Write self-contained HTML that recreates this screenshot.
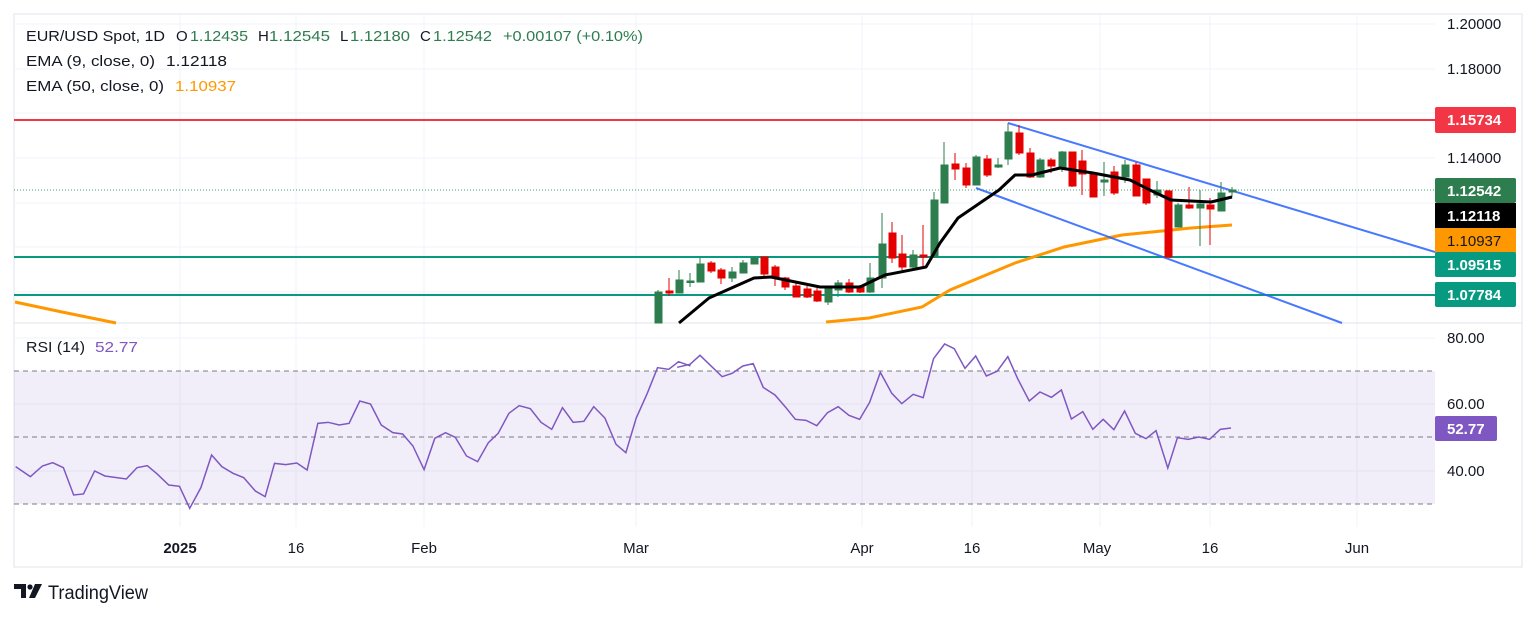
<!DOCTYPE html>
<html><head><meta charset="utf-8"><style>
body{margin:0;background:#fff;width:1536px;height:617px;overflow:hidden;font-family:"Liberation Sans",sans-serif}
svg{position:absolute;left:0;top:0}
</style></head><body>
<svg width="1536" height="617" viewBox="0 0 1536 617" font-family="Liberation Sans, sans-serif">
<rect x="14" y="14" width="1508" height="553" fill="#fff" stroke="#e0e3eb"/>
<g stroke="#f0f3fa" stroke-width="1">
<line x1="14" y1="24" x2="1435" y2="24"/><line x1="14" y1="69" x2="1435" y2="69"/><line x1="14" y1="113" x2="1435" y2="113"/><line x1="14" y1="158" x2="1435" y2="158"/><line x1="14" y1="203" x2="1435" y2="203"/><line x1="14" y1="247" x2="1435" y2="247"/><line x1="14" y1="292" x2="1435" y2="292"/>
<line x1="180" y1="14" x2="180" y2="527"/><line x1="296" y1="14" x2="296" y2="527"/><line x1="424" y1="14" x2="424" y2="527"/><line x1="636" y1="14" x2="636" y2="527"/><line x1="862" y1="14" x2="862" y2="527"/><line x1="972" y1="14" x2="972" y2="527"/><line x1="1100" y1="14" x2="1100" y2="527"/><line x1="1210" y1="14" x2="1210" y2="527"/><line x1="1357" y1="14" x2="1357" y2="527"/>
<line x1="14" y1="338" x2="1435" y2="338"/><line x1="14" y1="404" x2="1435" y2="404"/><line x1="14" y1="471" x2="1435" y2="471"/>
</g>
<line x1="14" y1="323" x2="1522" y2="323" stroke="#e0e3eb"/>
<line x1="14" y1="120" x2="1435" y2="120" stroke="#f23645" stroke-width="2"/>
<line x1="14" y1="190" x2="1435" y2="190" stroke="#43a070" stroke-width="1" stroke-dasharray="1,2"/>
<line x1="14" y1="257" x2="1435" y2="257" stroke="#089981" stroke-width="2"/>
<line x1="14" y1="295" x2="1435" y2="295" stroke="#089981" stroke-width="2"/>
<polyline fill="none" stroke="#ff9800" stroke-width="3" points="15,302 62,312 116,323"/>
<polyline fill="none" stroke="#ff9800" stroke-width="3" points="826,322 869,318 922,307 950,290 1015,263 1064,247 1122,235 1162,231 1191,228 1232,225"/>
<line x1="1008" y1="123" x2="1435" y2="252" stroke="#2962ff" stroke-width="2" opacity=".85"/>
<line x1="976" y1="188" x2="1342" y2="323" stroke="#2962ff" stroke-width="2" opacity=".85"/>
<g stroke-width="1">
<g stroke="#2e7d4f" fill="#2e7d4f">
<line x1="658" y1="290" x2="658" y2="323"/><rect x="655" y="292" width="7" height="31"/>
<line x1="679" y1="270" x2="679" y2="293"/><rect x="676" y="280" width="7" height="13"/>
<line x1="690" y1="273" x2="690" y2="287"/><rect x="687" y="281" width="7" height="1.5"/>
<line x1="700" y1="258" x2="700" y2="282"/><rect x="697" y="264" width="7" height="18"/>
<line x1="732" y1="267" x2="732" y2="282"/><rect x="729" y="272" width="7" height="6"/>
<line x1="743" y1="260" x2="743" y2="273"/><rect x="740" y="263" width="7" height="10"/>
<line x1="754" y1="256" x2="754" y2="264"/><rect x="751" y="258" width="7" height="6"/>
<line x1="828" y1="287" x2="828" y2="305"/><rect x="825" y="289" width="7" height="13"/>
<line x1="838" y1="280" x2="838" y2="297"/><rect x="835" y="283" width="7" height="7"/>
<line x1="870" y1="263" x2="870" y2="293"/><rect x="867" y="278" width="7" height="14"/>
<line x1="882" y1="213" x2="882" y2="288"/><rect x="879" y="244" width="7" height="34"/>
<line x1="913" y1="250" x2="913" y2="270"/><rect x="910" y="255" width="7" height="12"/>
<line x1="934" y1="192" x2="934" y2="257"/><rect x="931" y="200" width="7" height="57"/>
<line x1="944" y1="142" x2="944" y2="203"/><rect x="941" y="165" width="7" height="38"/>
<line x1="976" y1="155" x2="976" y2="185"/><rect x="973" y="157" width="7" height="28"/>
<line x1="998" y1="158" x2="998" y2="168"/><rect x="995" y="165" width="7" height="2"/>
<line x1="1008" y1="123" x2="1008" y2="165"/><rect x="1005" y="132" width="7" height="27"/>
<line x1="1040" y1="158" x2="1040" y2="178"/><rect x="1037" y="160" width="7" height="17"/>
<line x1="1062" y1="151" x2="1062" y2="172"/><rect x="1059" y="152" width="7" height="15"/>
<line x1="1104" y1="162" x2="1104" y2="196"/><rect x="1101" y="180" width="7" height="2"/>
<line x1="1125" y1="160" x2="1125" y2="183"/><rect x="1122" y="165" width="7" height="12"/>
<line x1="1157" y1="181" x2="1157" y2="198"/><rect x="1154" y="190" width="7" height="5"/>
<line x1="1178" y1="203" x2="1178" y2="227"/><rect x="1175" y="205" width="7" height="22"/>
<line x1="1200" y1="190" x2="1200" y2="246"/><rect x="1197" y="204" width="7" height="4"/>
<line x1="1221" y1="182" x2="1221" y2="211"/><rect x="1218" y="193" width="7" height="18"/>
<line x1="1232" y1="187" x2="1232" y2="197"/><rect x="1229" y="190" width="7" height="2"/>
</g>
<g stroke="#e50000" fill="#e50000">
<line x1="669" y1="278" x2="669" y2="296"/><rect x="666" y="291" width="7" height="2"/>
<line x1="711" y1="261" x2="711" y2="273"/><rect x="708" y="263" width="7" height="8"/>
<line x1="721" y1="268" x2="721" y2="284"/><rect x="718" y="270" width="7" height="8"/>
<line x1="764" y1="257" x2="764" y2="277"/><rect x="761" y="257" width="7" height="17"/>
<line x1="775" y1="265" x2="775" y2="286"/><rect x="772" y="267" width="7" height="11"/>
<line x1="785" y1="277" x2="785" y2="290"/><rect x="782" y="278" width="7" height="9"/>
<line x1="796" y1="283" x2="796" y2="297"/><rect x="793" y="286" width="7" height="11"/>
<line x1="807" y1="286" x2="807" y2="298"/><rect x="804" y="289" width="7" height="8"/>
<line x1="817" y1="288" x2="817" y2="302"/><rect x="814" y="291" width="7" height="10"/>
<line x1="849" y1="279" x2="849" y2="293"/><rect x="846" y="283" width="7" height="9"/>
<line x1="860" y1="285" x2="860" y2="293"/><rect x="857" y="287" width="7" height="5"/>
<line x1="892" y1="222" x2="892" y2="263"/><rect x="889" y="233" width="7" height="25"/>
<line x1="902" y1="235" x2="902" y2="270"/><rect x="899" y="254" width="7" height="13"/>
<line x1="923" y1="225" x2="923" y2="267"/><rect x="920" y="255" width="7" height="2"/>
<line x1="955" y1="153" x2="955" y2="180"/><rect x="952" y="164" width="7" height="5"/>
<line x1="966" y1="163" x2="966" y2="188"/><rect x="963" y="168" width="7" height="17"/>
<line x1="987" y1="155" x2="987" y2="177"/><rect x="984" y="159" width="7" height="16"/>
<line x1="1019" y1="125" x2="1019" y2="155"/><rect x="1016" y="133" width="7" height="20"/>
<line x1="1030" y1="148" x2="1030" y2="178"/><rect x="1027" y="153" width="7" height="24"/>
<line x1="1051" y1="158" x2="1051" y2="173"/><rect x="1048" y="160" width="7" height="6"/>
<line x1="1072" y1="152" x2="1072" y2="187"/><rect x="1069" y="152" width="7" height="34"/>
<line x1="1082" y1="150" x2="1082" y2="195"/><rect x="1079" y="161" width="7" height="13"/>
<line x1="1093" y1="173" x2="1093" y2="197"/><rect x="1090" y="173" width="7" height="24"/>
<line x1="1114" y1="166" x2="1114" y2="195"/><rect x="1111" y="172" width="7" height="21"/>
<line x1="1136" y1="162" x2="1136" y2="196"/><rect x="1133" y="165" width="7" height="31"/>
<line x1="1146" y1="185" x2="1146" y2="205"/><rect x="1143" y="179" width="7" height="24"/>
<line x1="1168" y1="190" x2="1168" y2="257"/><rect x="1165" y="191" width="7" height="66"/>
<line x1="1189" y1="187" x2="1189" y2="209"/><rect x="1186" y="205" width="7" height="3"/>
<line x1="1210" y1="198" x2="1210" y2="245"/><rect x="1207" y="205" width="7" height="4"/>
</g>
</g>
<polyline fill="none" stroke="#000" stroke-width="3" stroke-linejoin="round" points="679,323 709,298 754,278 771,277 820,287 860,287 885,275 926,267 940,243 958,218 999,190 1015,175 1032,175 1060,168 1093,173 1130,180 1154,192 1171,200 1211,202 1232,197"/>
<g font-size="15" fill="#131722" lengthAdjust="spacingAndGlyphs">
<text x="26" y="41" textLength="139" lengthAdjust="spacingAndGlyphs">EUR/USD Spot, 1D</text>
<text x="176" y="41">O</text><text x="190" y="41" fill="#2e7d4f" textLength="58" lengthAdjust="spacingAndGlyphs">1.12435</text>
<text x="258" y="41">H</text><text x="269" y="41" fill="#2e7d4f" textLength="61" lengthAdjust="spacingAndGlyphs">1.12545</text>
<text x="340" y="41">L</text><text x="350" y="41" fill="#2e7d4f" textLength="60" lengthAdjust="spacingAndGlyphs">1.12180</text>
<text x="420" y="41">C</text><text x="433" y="41" fill="#2e7d4f" textLength="59" lengthAdjust="spacingAndGlyphs">1.12542</text>
<text x="503" y="41" fill="#2e7d4f" textLength="140" lengthAdjust="spacingAndGlyphs">+0.00107 (+0.10%)</text>
<text x="26" y="66" textLength="129" lengthAdjust="spacingAndGlyphs">EMA (9, close, 0)</text><text x="166" y="66" textLength="61" lengthAdjust="spacingAndGlyphs">1.12118</text>
<text x="26" y="91" textLength="138" lengthAdjust="spacingAndGlyphs">EMA (50, close, 0)</text><text x="175" y="91" fill="#ff9800" textLength="61" lengthAdjust="spacingAndGlyphs">1.10937</text>
</g>
<g font-size="15" fill="#131722">
<text x="1447" y="29">1.20000</text><text x="1447" y="74">1.18000</text><text x="1447" y="163">1.14000</text>
</g>
<g font-size="15" font-weight="bold" fill="#fff">
<rect x="1435" y="107" width="81" height="26" rx="2" fill="#f23645"/><text x="1447" y="125">1.15734</text>
<rect x="1435" y="178" width="81" height="25" rx="2" fill="#2e7d4f"/><text x="1447" y="196">1.12542</text>
<rect x="1435" y="203" width="81" height="25" fill="#000"/><text x="1447" y="221">1.12118</text>
<rect x="1435" y="228" width="81" height="25" fill="#ff9800"/><text x="1447" y="246" fill="#131722" font-weight="normal">1.10937</text>
<rect x="1435" y="252" width="81" height="25" rx="2" fill="#089981"/><text x="1447" y="270">1.09515</text>
<rect x="1435" y="282" width="81" height="25" rx="2" fill="#089981"/><text x="1447" y="300">1.07784</text>
</g>
<rect x="14" y="371" width="1421" height="133" fill="#7e57c2" fill-opacity="0.1"/>
<g stroke="#787b86" stroke-dasharray="5,4" stroke-width="1">
<line x1="14" y1="371" x2="1435" y2="371"/><line x1="14" y1="437" x2="1435" y2="437"/><line x1="14" y1="504" x2="1435" y2="504"/>
</g>
<g transform="translate(0,320) scale(0.4464,0.3333)">
<polyline fill="none" stroke="#7e57c2" stroke-width="1.5" vector-effect="non-scaling-stroke" points="35,440 68,470 95,438 118,428 142,443 165,525 187,522 212,453 235,468 283,477 307,443 330,437 352,462 378,495 402,499 425,565 450,503 474,405 497,440 522,460 546,473 572,513 594,530 615,430 640,434 665,429 688,450 712,310 735,307 760,315 782,310 806,243 830,252 854,315 880,338 902,342 925,378 950,449 974,355 998,338 1020,352 1045,408 1070,425 1094,368 1116,340 1140,280 1163,257 1188,266 1212,307 1236,328 1260,263 1284,307 1308,304 1330,260 1355,294 1380,373 1402,398 1425,295 1450,220 1473,143 1498,148 1520,125 1545,137 1546,132"/>
</g>
<g transform="translate(690,330) scale(0.3571,0.3333)">
<polyline fill="none" stroke="#7e57c2" stroke-width="1.5" vector-effect="non-scaling-stroke" points="-36,112 0,103 28,76 90,140 118,130 148,108 177,101 205,172 238,195 268,232 295,268 325,271 355,287 385,248 415,230 445,256 475,268 503,217 533,127 565,190 593,221 625,193 653,203 682,86 713,42 740,56 770,115 800,78 830,138 860,124 890,80 918,147 950,213 980,186 1012,202 1040,180 1068,267 1100,245 1128,298 1157,268 1187,299 1217,243 1247,310 1277,326 1305,302 1338,414 1365,323 1395,328 1425,321 1455,328 1485,298 1515,294"/>
</g>
<text x="26" y="352" font-size="15" fill="#131722" textLength="59" lengthAdjust="spacingAndGlyphs">RSI (14)</text>
<text x="95" y="352" font-size="15" fill="#7e57c2" textLength="43" lengthAdjust="spacingAndGlyphs">52.77</text>
<g font-size="15" fill="#131722">
<text x="1447" y="343">80.00</text><text x="1447" y="409">60.00</text><text x="1447" y="476">40.00</text>
</g>
<rect x="1435" y="416" width="62" height="25" rx="2" fill="#7e57c2"/>
<text x="1447" y="434" font-size="15" font-weight="bold" fill="#fff">52.77</text>
<g font-size="15" fill="#131722" text-anchor="middle">
<text x="180" y="553" font-weight="bold">2025</text><text x="296" y="553">16</text><text x="424" y="553">Feb</text><text x="636" y="553">Mar</text><text x="862" y="553">Apr</text><text x="972" y="553">16</text><text x="1097" y="553">May</text><text x="1210" y="553">16</text><text x="1357" y="553">Jun</text>
</g>
<g fill="#131722">
<path d="M14 584h12v14h-5v-9h-7z"/>
<circle cx="30" cy="587" r="2.6"/>
<path d="M35 584h7l-7 14h-6z"/>
</g>
<text x="48" y="599" font-size="19" fill="#131722" textLength="100" lengthAdjust="spacingAndGlyphs">TradingView</text>
</svg>
</body></html>
